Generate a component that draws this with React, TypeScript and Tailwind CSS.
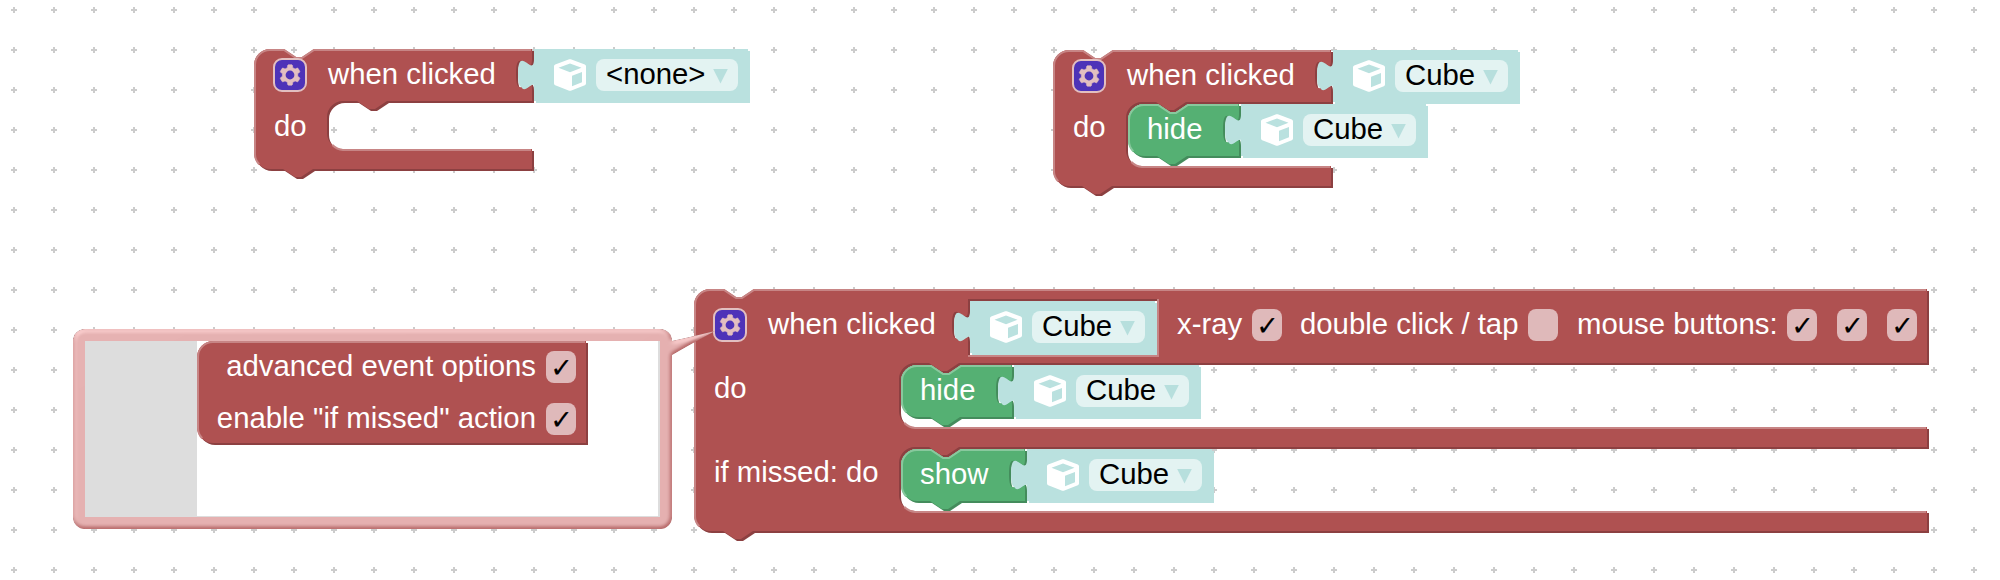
import React from 'react';

type Tone = 'red' | 'green' | 'teal';

const TONES: Record<Tone, { fill: string; dark: string; light: string }> = {
  red: { fill: '#af5151', dark: '#8c4041', light: '#c78585' },
  green: { fill: '#55b073', dark: '#448c5c', light: '#88c89d' },
  teal: { fill: '#bae1df', dark: '#bae1df', light: 'none' },
};

// Outlines are written in block units; one unit is two screen pixels.
const NOTCH = 'l 6,4 3,0 6,-4';
const NOTCH_BACK = 'l -6,4 -3,0 -6,-4';
const SOCKET = 'c 0,10 -8,-8 -8,7.5 s 8,-2.5 8,7.5';
const TOP = `m 0,8 A 8,8 0 0,1 8,0 H 15 ${NOTCH}`;

function Shape({ d, light, tone, w, h }: { d: string; light?: string; tone: Tone; w: number; h: number }) {
  const c = TONES[tone];
  return (
    <svg
      className="pointer-events-none absolute top-0 left-0 overflow-visible"
      width={w * 2}
      height={h * 2}
      viewBox={`0 0 ${w} ${h}`}
    >
      <path d={d} fill={c.dark} fillRule="evenodd" transform="translate(1,1)" />
      <path d={d} fill={c.fill} fillRule="evenodd" />
      {light && <path d={light} fill="none" stroke={c.light} strokeWidth={1} />}
    </svg>
  );
}

const lightTop = (w: number, h: number) =>
  `m 2.6,${h - 2.4} A 7.5,7.5 0 0,1 0.5,${h - 8} V 8 A 7.5,7.5 0 0,1 8,0.5 H 15 ${NOTCH} H ${w - 0.5}`;

const lightStatement = (x: number, bottom: number, w: number) =>
  ` M ${x + 2.7},${bottom - 2} A 8.5,8.5 0 0,0 ${x + 8},${bottom + 0.5} H ${w - 0.5}`;

function Gear() {
  return (
    <svg className="-m-px h-[34px] w-[34px] shrink-0" viewBox="-0.5 -0.5 17 17">
      <rect width="16" height="16" rx="4" fill="#4d33b8" stroke="#e2bfc0" strokeWidth="1" />
      <path
        fill="#e2bfc0"
        stroke="#e2bfc0"
        strokeWidth="0.3"
        d="m4.203,7.296 0,1.368 -0.92,0.677 -0.11,0.41 0.9,1.559 0.41,0.11 1.043,-0.457 1.187,0.683 0.127,1.134 0.3,0.3 1.8,0 0.3,-0.299 0.127,-1.138 1.185,-0.682 1.046,0.458 0.409,-0.11 0.9,-1.559 -0.11,-0.41 -0.92,-0.677 0,-1.366 0.92,-0.677 0.11,-0.41 -0.9,-1.559 -0.409,-0.109 -1.046,0.458 -1.185,-0.682 -0.127,-1.138 -0.3,-0.299 -1.8,0 -0.3,0.3 -0.126,1.135 -1.187,0.682 -1.043,-0.457 -0.41,0.11 -0.899,1.559 0.108,0.409z"
      />
      <circle cx="8" cy="8" r="2.2" fill="#4d33b8" />
    </svg>
  );
}

function CubeIcon() {
  return (
    <svg className="h-8 w-8 shrink-0" viewBox="0 0 32 32">
      <path
        fill="#fff"
        fillRule="evenodd"
        d="M15.2 0.3 Q16 0 16.8 0.3 L30.8 5.6 Q32 6.1 32 7.3 V24.6 Q32 25.8 30.8 26.3 L16.8 31.7 Q16 32 15.2 31.7 L1.2 26.3 Q0 25.8 0 24.6 V7.3 Q0 6.1 1.2 5.6 Z M16 4.5 L4.5 8.8 L16 13.3 L27.5 8.8 Z M18 16.8 V27.2 L28 23.2 V12.9 Z"
      />
    </svg>
  );
}

function Label({ children, className = '' }: { children: React.ReactNode; className?: string }) {
  return <span className={`shrink-0 leading-8 whitespace-nowrap text-white ${className}`}>{children}</span>;
}

function Check({ on = true, className = '' }: { on?: boolean; className?: string }) {
  return (
    <span
      className={`flex h-8 w-[30px] shrink-0 items-center justify-center rounded-lg bg-[#dfb9ba] leading-8 text-black ${className}`}
    >
      {on && (
        <span className="pt-px pl-px font-['DejaVu_Sans',sans-serif] text-[27px] [-webkit-text-stroke:0.15px_black]">
          ✓
        </span>
      )}
    </span>
  );
}

function ObjectBlock({ value, w }: { value: string; w: number }) {
  return (
    <div className="relative h-[52px] shrink-0 pt-[10px] pr-[10px] pl-5" style={{ width: w * 2 }}>
      <Shape
        tone="teal"
        w={w}
        h={26}
        d={`M 0,0 H ${w} V 26 H 0 V 20 c 0,-10 -8,8 -8,-7.5 s 8,2.5 8,-7.5 z`}
      />
      <div className="relative flex gap-[10px]">
        <CubeIcon />
        <div className="flex h-8 flex-1 items-start justify-between rounded-lg bg-[#e3f3f2] px-[10px] text-black">
          <span className="-mt-px w-0 leading-8 whitespace-nowrap">{value}</span>
          <svg className="mt-[10px] h-[15px] w-[15px] shrink-0" viewBox="0 0 15 15">
            <path d="M0.2 0 H14.8 L7.5 14.5 Z" fill="#b7dfdd" />
          </svg>
        </div>
      </div>
    </div>
  );
}

function ActionBlock({ label, w }: { label: string; w: number }) {
  return (
    <div className="flex">
      <div className="relative h-[52px] shrink-0" style={{ width: w * 2 + 2 }}>
        <Shape
          tone="green"
          w={w}
          h={26}
          d={`${TOP} H ${w} V 5 ${SOCKET} V 26 H 29.5 ${NOTCH_BACK} H 8 a 8,8 0 0,1 -8,-8 z`}
          light={lightTop(w, 26)}
        />
        <div className="relative flex pt-[9px] pl-[19px]">
          <Label>{label}</Label>
        </div>
      </div>
      <ObjectBlock value="Cube" w={92.5} />
    </div>
  );
}

function ClickBlock({ target, targetWidth, body }: { target: string; targetWidth: number; body?: React.ReactNode }) {
  const bottom = body ? 58 : 50;
  const end = bottom + 10;
  return (
    <div className="relative">
      <Shape
        tone="red"
        w={139}
        h={end}
        d={`${TOP} H 139 V 5 ${SOCKET} V 26 H 66.5 ${NOTCH_BACK} h -7 a 8,8 0 0,0 -8,8 V ${bottom - 8} a 8,8 0 0,0 8,8 H 139 V ${end} H 29.5 ${NOTCH_BACK} H 8 a 8,8 0 0,1 -8,-8 z`}
        light={lightTop(139, end) + lightStatement(36.5, bottom, 139)}
      />
      <div className="relative flex h-[54px]">
        <div className="flex w-[280px] shrink-0 items-start gap-[22px] pt-[10px] pl-5">
          <Gear />
          <Label className="-mt-px">when clicked</Label>
        </div>
        <ObjectBlock value={target} w={targetWidth} />
      </div>
      <div className="relative flex">
        <div className="flex w-[75px] shrink-0 items-start pt-[7px] pl-5">
          <Label>do</Label>
        </div>
        {body}
      </div>
    </div>
  );
}

function AdvancedBlock() {
  const w = 616.5;
  const hole = `M 137,5 H 231.5 V 33 H 137 V 25.5 c 0,-10 -8,8 -8,-7.5 s 8,2.5 8,-7.5 z`;
  const arm = (top: number) =>
    `H 132.5 V ${top} ${NOTCH_BACK} h -7 a 8,8 0 0,0 -8,8 v 16 a 8,8 0 0,0 8,8 H ${w} v 10`;
  return (
    <div className="relative">
      <Shape
        tone="red"
        w={w}
        h={121}
        d={`${TOP} H ${w} V 37 ${arm(37)} ${arm(79)} H 29.5 ${NOTCH_BACK} H 8 a 8,8 0 0,1 -8,-8 z ${hole}`}
        light={`${lightTop(w, 121)} ${lightStatement(102.5, 69, w)} ${lightStatement(102.5, 111, w)} M 232,5 V 33.5 H 137`}
      />
      <div className="relative flex h-[76px] items-start">
        <div className="flex w-[276px] shrink-0 items-start gap-[22px] pt-5 pl-5">
          <Gear />
          <Label className="-mt-px">when clicked</Label>
        </div>
        <div className="w-[187px] shrink-0 pt-3">
          <ObjectBlock value="Cube" w={92.5} />
        </div>
        <div className="flex items-start pt-5 pl-5">
          <Label className="-mt-px w-[75px]">x-ray</Label>
          <Check />
          <Label className="-mt-px ml-[18px] w-[228px]">double click / tap</Label>
          <Check on={false} />
          <Label className="-mt-px ml-[19px] w-[210px]">mouse buttons:</Label>
          <div className="flex gap-5">
            <Check />
            <Check />
            <Check />
          </div>
        </div>
      </div>
      <div className="relative flex h-[84px]">
        <div className="flex w-[207px] shrink-0 items-start pt-[7px] pl-5">
          <Label>do</Label>
        </div>
        <ActionBlock label="hide" w={55.5} />
      </div>
      <div className="relative flex h-[84px]">
        <div className="flex w-[207px] shrink-0 items-start pt-[7px] pl-5">
          <Label>if missed: do</Label>
        </div>
        <ActionBlock label="show" w={62} />
      </div>
    </div>
  );
}

function OptionsBubble() {
  return (
    <div className="relative h-[200px] w-[599px]">
      <svg className="absolute top-0 left-0 overflow-visible" width="599" height="200" viewBox="0 0 599 200">
        <defs>
          <filter id="emboss" x="-5%" y="-5%" width="112%" height="110%">
            <feGaussianBlur in="SourceAlpha" stdDeviation="2" result="blur" />
            <feSpecularLighting
              in="blur"
              surfaceScale="1"
              specularConstant="0.5"
              specularExponent="10"
              lightingColor="white"
              result="specOut"
            >
              <fePointLight x="-5000" y="-10000" z="20000" />
            </feSpecularLighting>
            <feComposite in="specOut" in2="SourceAlpha" operator="in" result="specOut" />
            <feComposite in="SourceGraphic" in2="specOut" operator="arithmetic" k1="0" k2="1" k3="1" k4="0" />
          </filter>
        </defs>
        <g filter="url(#emboss)">
          <path d="M590 13 L599 12 Q618 8 642 2 Q616 16 599 26 L590 30 Z" fill="#af5151" />
          <rect width="599" height="200" rx="12" fill="#af5151" />
        </g>
      </svg>
      <div className="relative h-full p-3">
        <div className="relative flex h-full border-r-2 border-b border-[#dddddd] bg-white">
          <div className="w-28 shrink-0 bg-[#dddddd]" />
          <div className="relative h-[102px] w-[389px]">
            <Shape
              tone="red"
              w={194.5}
              h={51}
              d="M 8,0 H 194.5 V 51 H 8 a 8,8 0 0,1 -8,-8 V 8 a 8,8 0 0,1 8,-8 z"
              light="m 2.6,48.6 A 7.5,7.5 0 0,1 0.5,43 V 8 A 7.5,7.5 0 0,1 8,0.5 H 194"
            />
            <div className="relative flex flex-col items-end gap-5 pt-[10px] pr-[10px]">
              <div className="flex items-start gap-[10px]">
                <Label className="-mt-px">advanced event options</Label>
                <Check />
              </div>
              <div className="flex items-start gap-[10px]">
                <Label className="-mt-px">enable "if missed" action</Label>
                <Check />
              </div>
            </div>
          </div>
        </div>
      </div>
    </div>
  );
}

function Grid() {
  return (
    <svg className="absolute inset-0 h-full w-full">
      <defs>
        <pattern id="grid" x="-6" y="-10" width="40" height="40" patternUnits="userSpaceOnUse">
          <path d="M17 20 h6 M20 17 v6" stroke="#cccccc" strokeWidth="2" />
        </pattern>
      </defs>
      <rect width="100%" height="100%" fill="url(#grid)" />
    </svg>
  );
}

export default function App() {
  return (
    <main className="relative h-[580px] w-[2000px] overflow-hidden bg-white font-['Liberation_Sans',Arial,sans-serif] text-[29.33px]">
      <Grid />
      <div className="absolute top-[49px] left-[254px]">
        <ClickBlock target="<none>" targetWidth={107} />
      </div>
      <div className="absolute top-[50px] left-[1053px]">
        <ClickBlock target="Cube" targetWidth={92.5} body={<ActionBlock label="hide" w={55.5} />} />
      </div>
      <div className="absolute top-[289px] left-[694px]">
        <AdvancedBlock />
      </div>
      <div className="absolute top-[329px] left-[73px]">
        <OptionsBubble />
      </div>
    </main>
  );
}
